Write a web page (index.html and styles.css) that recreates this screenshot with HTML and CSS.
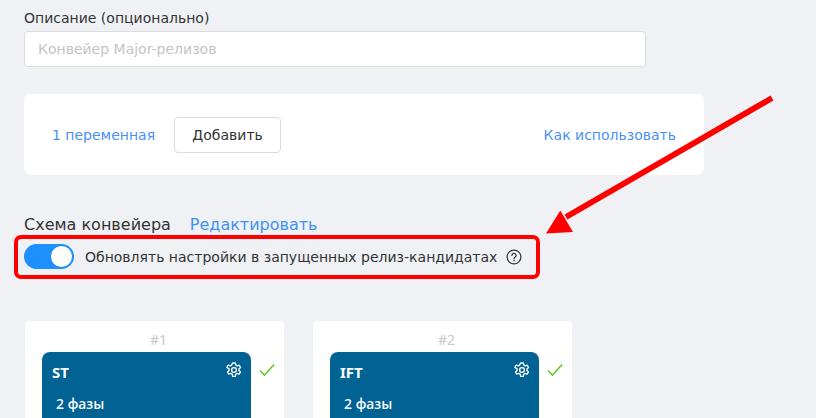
FILE: index.html
```html
<!DOCTYPE html>
<html lang="ru">
<head>
<meta charset="utf-8">
<title>Схема конвейера</title>
<link rel="stylesheet" href="styles.css">
</head>
<body>
<main class="page">
  <label class="field-label">Описание (опционально)</label>
  <div class="input"><span class="placeholder">Конвейер Major-релизов</span></div>

  <section class="vars">
    <a class="link vars-count">1 переменная</a>
    <button class="btn">Добавить</button>
    <a class="link vars-help">Как использовать</a>
  </section>

  <div class="schema-head">
    <span class="schema-title">Схема конвейера</span>
    <a class="link-strong">Редактировать</a>
  </div>

  <div class="switch-row">
    <span class="switch"><span class="knob"></span></span>
    <span class="switch-text">Обновлять настройки в запущенных релиз-кандидатах</span>
    <svg class="help" width="16" height="16" viewBox="0 0 16 16" fill="none" stroke="#333" stroke-width="1.2" stroke-linecap="round"><circle cx="8" cy="8" r="6.9"/><path d="M5.9 6.4a2.1 2.1 0 1 1 3.3 1.7c-.8.5-1.2.9-1.2 1.7"/><path d="M8 11.7v.1" stroke-width="1.5"/></svg>
  </div>

  <div class="stages">
    <article class="card">
      <div class="card-num">#1</div>
      <div class="card-row">
        <div class="stage">
          <div class="stage-head">
            <span class="stage-name">ST</span>
            <svg class="gear" width="16" height="16" viewBox="0 0 24 24" fill="none" stroke="#fff" stroke-width="2" stroke-linejoin="round"><circle cx="12" cy="12" r="3.6"/><path d="M10 1.5h4l.7 3.2 2 1.1 3.1-1 2 3.4-2.4 2.2v2.2l2.4 2.2-2 3.4-3.1-1-2 1.1-.7 3.2h-4l-.7-3.2-2-1.1-3.1 1-2-3.4 2.4-2.2v-2.2L1.200 8.200l2-3.400 3.100 1 2-1.100z"/></svg>
          </div>
          <div class="stage-phases">2 фазы</div>
        </div>
        <svg class="check" width="16" height="14" viewBox="0 0 16 14" fill="none" stroke="#52c41a" stroke-width="1.300"><path d="M1 7.500l4.500 4.800L15 1.500"/></svg>
      </div>
    </article>
    <article class="card">
      <div class="card-num">#2</div>
      <div class="card-row">
        <div class="stage">
          <div class="stage-head">
            <span class="stage-name">IFT</span>
            <svg class="gear" width="16" height="16" viewBox="0 0 24 24" fill="none" stroke="#fff" stroke-width="2" stroke-linejoin="round"><circle cx="12" cy="12" r="3.6"/><path d="M10 1.5h4l.7 3.2 2 1.1 3.1-1 2 3.4-2.4 2.2v2.2l2.4 2.2-2 3.4-3.1-1-2 1.1-.7 3.2h-4l-.7-3.2-2-1.1-3.1 1-2-3.4 2.4-2.2v-2.2L1.200 8.200l2-3.400 3.100 1 2-1.100z"/></svg>
          </div>
          <div class="stage-phases">2 фазы</div>
        </div>
        <svg class="check" width="16" height="14" viewBox="0 0 16 14" fill="none" stroke="#52c41a" stroke-width="1.300"><path d="M1 7.500l4.500 4.800L15 1.500"/></svg>
      </div>
    </article>
  </div>
</main>

<div class="annot-box"></div>
<svg class="annot-arrow" width="816" height="418" viewBox="0 0 816 418"><path d="M772 98L566 217" stroke="#f00" stroke-width="5.800" fill="none"/><path d="M546 233.500L560.300 210.500L573 232Z" fill="#f00"/></svg>
</body>
</html>
```
FILE: styles.css
```css
* { box-sizing: border-box; }
html, body { margin: 0; height: 418px; overflow: hidden; }
body { background: #f0f1f5; font-family: "DejaVu Sans", sans-serif; color: #333; position: relative; }
.page { padding: 8px 24px 0; height: 418px; overflow: hidden; }
.field-label { display: block; font-size: 14px; line-height: 20px; height: 23px; }
.input { width: 622px; height: 36px; background: #fff; border: 1px solid #dcdcdc; border-radius: 4px; padding: 0 13px; display: flex; align-items: center; font-size: 14px; }
.placeholder { color: #c4c4c4; }
.vars { width: 680px; height: 81px; margin-top: 27px; background: #fff; border-radius: 6px; display: flex; align-items: center; padding: 0 28px; font-size: 14px; }
.link { color: #4a90f5; }
.vars-count { margin-right: 19px; }
.btn { width: 107px; height: 36px; background: #fff; border: 1px solid #dcdcdc; border-radius: 4px; font: inherit; color: #333; padding: 0; }
.vars-help { margin-left: auto; }
.schema-head { display: flex; align-items: center; gap: 19px; margin-top: 37px; height: 24px; font-size: 16px; }
.link-strong { color: #3f92f5; }
.switch-row { display: flex; align-items: center; margin-top: 8px; height: 25px; font-size: 14px; }
.switch { flex: none; width: 50px; height: 25px; border-radius: 13px; background: #1e8fff; display: flex; align-items: center; justify-content: flex-end; padding-right: 2px; }
.knob { width: 21px; height: 21px; border-radius: 50%; background: #fff; }
.switch-text { margin-left: 11px; white-space: nowrap; }
.help { flex: none; margin-left: 9px; }
.stages { display: flex; gap: 29px; margin-top: 52px; margin-left: 1px; }
.card { flex: none; width: 259px; height: 140px; background: #fff; border-radius: 4px; padding-top: 9px; }
.card-num { width: 233px; margin-left: 17px; text-align: center; font-family: "Noto Sans", sans-serif; font-size: 14px; line-height: 20px; height: 22px; color: #c8c8c8; }
.card-row { display: flex; align-items: flex-start; padding-left: 17px; }
.stage { flex: none; width: 209px; height: 120px; background: #006394; border-radius: 8px; color: #fff; padding: 9px 10px 0; font-family: "Noto Sans", sans-serif; }
.stage-head { display: flex; justify-content: space-between; height: 30px; }
.stage-name { font-size: 15px; font-weight: 700; line-height: 22px; }
.gear { margin-right: -1px; margin-top: 1px; }
.stage-phases { font-size: 14px; font-weight: 500; line-height: 20px; margin-top: 3px; padding-left: 4px; }
.check { margin: 11px 0 0 8px; }
.annot-box { position: absolute; left: 13.500px; top: 235px; width: 526.500px; height: 44px; border: 4.500px solid #f00; border-radius: 7px; }
.annot-arrow { position: absolute; left: 0; top: 0; pointer-events: none; }
```
